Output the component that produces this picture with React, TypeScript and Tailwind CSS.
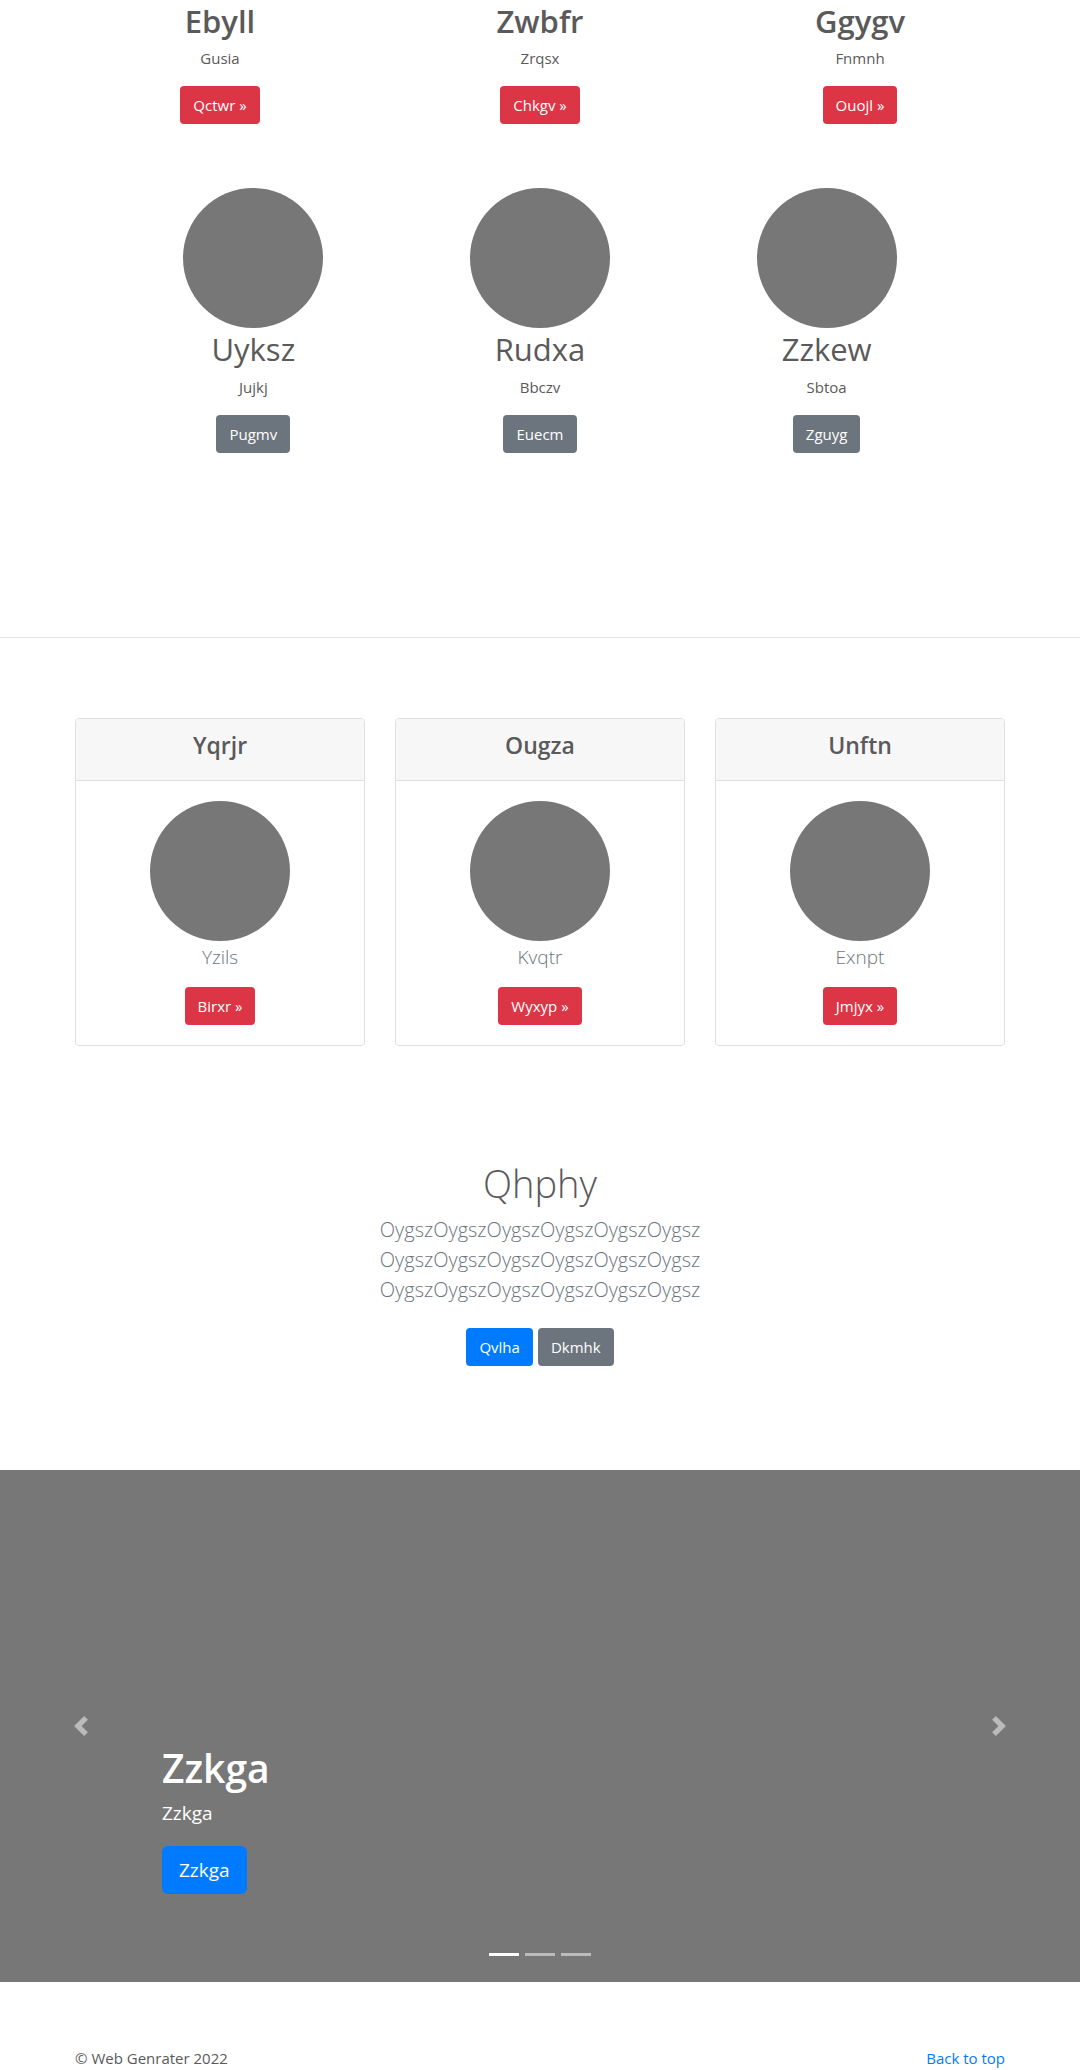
import React from "react";

type ButtonProps = { tone: "red" | "gray" | "blue"; children: React.ReactNode };

const tones = {
  red: "bg-[#dc3545]",
  gray: "bg-[#6c757d]",
  blue: "bg-[#007bff]",
};

function Button({ tone, children }: ButtonProps) {
  return (
    <button type="button" className={`h-[38px] rounded px-[13px] text-[15px] leading-6 text-white ${tones[tone]}`}>
      {children}
    </button>
  );
}

function Circle() {
  return <div className="size-[140px] rounded-full bg-[#777]" />;
}

const links = [
  { title: "Ebyll", text: "Gusia", action: "Qctwr" },
  { title: "Zwbfr", text: "Zrqsx", action: "Chkgv" },
  { title: "Ggygv", text: "Fnmnh", action: "Ouojl" },
];

const people = [
  { title: "Uyksz", text: "Jujkj", action: "Pugmv" },
  { title: "Rudxa", text: "Bbczv", action: "Euecm" },
  { title: "Zzkew", text: "Sbtoa", action: "Zguyg" },
];

const cards = [
  { title: "Yqrjr", text: "Yzils", action: "Birxr" },
  { title: "Ougza", text: "Kvqtr", action: "Wyxyp" },
  { title: "Unftn", text: "Exnpt", action: "Jmjyx" },
];

export default function App() {
  return (
    <div className="bg-white font-['Open_Sans','Noto_Sans',sans-serif] text-[15px] leading-6 text-[#5a5a5a]">
      <main>
        <section className="mx-auto grid max-w-[960px] grid-cols-3">
          {links.map((item) => (
            <div key={item.title} className="flex flex-col items-center">
              <h2 className="mb-1 text-[31px] leading-[42px] font-semibold">{item.title}</h2>
              <p className="mb-4">{item.text}</p>
              <Button tone="red">{item.action} »</Button>
            </div>
          ))}
        </section>

        <section className="mx-auto mt-16 grid max-w-[960px] grid-cols-3 px-[50px]">
          {people.map((item) => (
            <div key={item.title} className="flex flex-col items-center">
              <Circle />
              <h2 className="mb-[5px] text-[31px] leading-[42px]">{item.title}</h2>
              <p className="mb-4">{item.text}</p>
              <Button tone="gray">{item.action}</Button>
            </div>
          ))}
        </section>

        <hr className="mt-[184px] mb-20 border-t border-[#e5e5e5]" />

        <section className="mx-auto grid max-w-[960px] grid-cols-3 gap-[30px] px-[15px]">
          {cards.map((item) => (
            <article key={item.title} className="overflow-hidden rounded border border-[#dfdfdf]">
              <header className="border-b border-[#dfdfdf] bg-[#f7f7f7] pt-3 pb-5 text-center">
                <h3 className="text-[23px] leading-[29px] font-semibold">{item.title}</h3>
              </header>
              <div className="flex flex-col items-center p-5">
                <Circle />
                <p className="mb-3.5 text-[19px] leading-8 font-light text-[#6c757d]">{item.text}</p>
                <Button tone="red">{item.action} »</Button>
              </div>
            </article>
          ))}
        </section>

        <section className="mx-auto mt-[113px] max-w-[960px] px-[15px] pb-[104px] text-center">
          <h1 className="mb-2 text-[38px] leading-[48px] font-light">Qhphy</h1>
          <p className="text-[20px] leading-[30px] font-light text-[#6c757d]">
            OygszOygszOygszOygszOygszOygsz
            <br />
            OygszOygszOygszOygszOygszOygsz
            <br />
            OygszOygszOygszOygszOygszOygsz
          </p>
          <div className="mt-[23px] flex justify-center gap-[5px]">
            <Button tone="blue">Qvlha</Button>
            <Button tone="gray">Dkmhk</Button>
          </div>
        </section>

        <section aria-label="Carousel" className="relative flex h-[512px] flex-col justify-end bg-[#777]">
          <div className="px-[15%] pb-[88px] text-white">
            <h1 className="mb-1.5 text-[39px] leading-[48px] font-semibold">Zzkga</h1>
            <p className="mb-[18px] text-[19px] leading-[30px]">Zzkga</p>
            <button type="button" className="h-12 rounded-md bg-[#007bff] px-[17px] text-[19px] leading-[30px]">
              Zzkga
            </button>
          </div>
          <button
            type="button"
            aria-label="Previous"
            className="absolute inset-y-0 left-0 flex w-[15%] items-center justify-center text-white opacity-50"
          >
            <svg className="size-5" viewBox="0 0 8 8" fill="currentColor" aria-hidden="true">
              <path d="M5.25 0l-4 4 4 4 1.5-1.5L4.25 4l2.5-2.5L5.25 0z" />
            </svg>
          </button>
          <button
            type="button"
            aria-label="Next"
            className="absolute inset-y-0 right-0 flex w-[15%] items-center justify-center text-white opacity-50"
          >
            <svg className="size-5" viewBox="0 0 8 8" fill="currentColor" aria-hidden="true">
              <path d="M2.75 0l-1.5 1.5L3.75 4l-2.5 2.5L2.75 8l4-4-4-4z" />
            </svg>
          </button>
          <div className="absolute inset-x-0 bottom-[26px] flex justify-center gap-1.5">
            <button type="button" aria-label="Slide 1" className="h-[3px] w-[30px] bg-white" />
            <button type="button" aria-label="Slide 2" className="h-[3px] w-[30px] bg-white/50" />
            <button type="button" aria-label="Slide 3" className="h-[3px] w-[30px] bg-white/50" />
          </div>
        </section>
      </main>

      <footer className="mx-auto mt-16 flex max-w-[960px] justify-between px-[15px]">
        <p>© Web Genrater 2022</p>
        <a href="#" className="text-[#007bff]">
          Back to top
        </a>
      </footer>
    </div>
  );
}
